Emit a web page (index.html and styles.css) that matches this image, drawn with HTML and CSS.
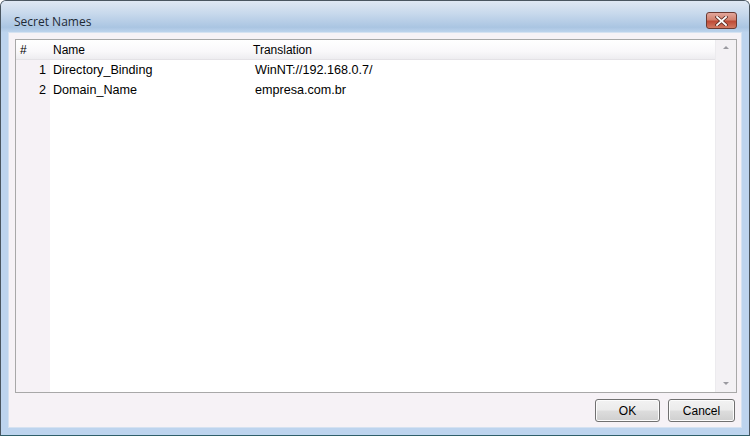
FILE: index.html
```html
<!DOCTYPE html>
<html lang="en">
<head>
    <meta charset="UTF-8">
    <title>Secret Names</title>
    <link rel="stylesheet" href="styles.css">
</head>
<body>
    <div class="window">
        <div class="titlebar">
            <span class="title">Secret Names</span>
            <button class="close-btn" title="Close">
                <svg width="13" height="10" viewBox="0 0 13 10">
                    <path d="M2 1 L11 9 M11 1 L2 9" stroke="#5a2a22" stroke-width="3.4" stroke-linecap="square"/>
                    <path d="M2 1 L11 9 M11 1 L2 9" stroke="#ffffff" stroke-width="1.8" stroke-linecap="square"/>
                </svg>
            </button>
        </div>
        <div class="client">
            <div class="grid">
                <div class="grid-body">
                    <div class="row header">
                        <div class="cell num">#</div>
                        <div class="cell name">Name</div>
                        <div class="cell value">Translation</div>
                    </div>
                    <div class="row">
                        <div class="cell num">1</div>
                        <div class="cell name">Directory_Binding</div>
                        <div class="cell value">WinNT://192.168.0.7/</div>
                    </div>
                    <div class="row">
                        <div class="cell num">2</div>
                        <div class="cell name">Domain_Name</div>
                        <div class="cell value">empresa.com.br</div>
                    </div>
                    <div class="row filler">
                        <div class="cell num"></div>
                        <div class="cell name"></div>
                    </div>
                </div>
                <div class="scrollbar">
                    <span class="arrow up"></span>
                    <span class="arrow down"></span>
                </div>
            </div>
            <div class="buttons">
                <button class="btn ok">OK</button>
                <button class="btn cancel">Cancel</button>
            </div>
        </div>
    </div>
</body>
</html>
```

FILE: styles.css
```css
body {
    margin: 0;
    font-family: "Liberation Sans", Arial, sans-serif;
    font-size: 12px;
    color: #000;
    background: #fff;
}

.window {
    width: 750px;
    height: 436px;
    box-sizing: border-box;
    border: 1px solid #4a5660;
    border-bottom-color: #2f5f6a;
    border-radius: 6px 6px 0 0;
    background: #bdd4ee;
    display: flex;
    flex-direction: column;
    padding: 0 7px 7px 7px;
}

.titlebar {
    height: 31px;
    margin: 0 -7px;
    padding: 0 12px 0 13px;
    display: flex;
    align-items: center;
    justify-content: space-between;
    background: linear-gradient(to bottom, #dfe8f3 0%, #c8d9ec 40%, #aac5e2 85%, #bcd3ec 100%);
    border-radius: 5px 5px 0 0;
}

.title {
    font-family: "Open Sans", "Liberation Sans", sans-serif;
    font-size: 12px;
    color: #1e2a36;
    padding-top: 9px;
}

.close-btn {
    width: 31px;
    height: 17px;
    margin-top: 8px;
    padding: 0;
    border: 1px solid #6b3a32;
    border-radius: 3px;
    background: linear-gradient(to bottom, #e2a69b 0%, #d2826f 45%, #bd4a36 55%, #d27a63 100%);
    display: flex;
    align-items: center;
    justify-content: center;
}

.client {
    flex: 1;
    background: #f6f2f6;
    border: 1px solid #d5e2f1;
    display: flex;
    flex-direction: column;
    padding: 6px 4px 5px 6px;
}

.grid {
    flex: 1;
    display: flex;
    border: 1px solid #a8a8a8;
    background: #fff;
    font-size: 12.6px;
}

.grid-body {
    flex: 1;
    display: flex;
    flex-direction: column;
}

.row {
    display: flex;
    height: 20px;
    align-items: center;
}

.row.header {
    height: 19px;
    background: linear-gradient(to bottom, #ffffff 0%, #f9f8fa 60%, #eeedf0 100%);
    border-bottom: 1px solid #e4e2e6;
    font-size: 12px;
}

.row.filler {
    flex: 1;
    align-items: stretch;
}

.cell {
    white-space: nowrap;
}

.cell.num {
    width: 34px;
    box-sizing: border-box;
    padding-right: 4px;
    text-align: right;
    align-self: stretch;
    display: flex;
    align-items: center;
    justify-content: flex-end;
    background: #f6f2f6;
}

.header .cell.num {
    justify-content: flex-start;
    padding-left: 4px;
    background: transparent;
}

.cell.name {
    width: 199px;
    padding-left: 3px;
}

.cell.value {
    padding-left: 3px;
}

.header .cell.value {
    padding-left: 1px;
}

.scrollbar {
    width: 20px;
    background: #f3f1f4;
    border-left: 1px solid #ecebee;
    display: flex;
    flex-direction: column;
    justify-content: space-between;
    align-items: center;
    padding: 6px 0 7px;
}

.arrow {
    width: 0;
    height: 0;
    border-left: 3px solid transparent;
    border-right: 3px solid transparent;
}

.arrow.up {
    border-bottom: 3px solid #9a9aa0;
}

.arrow.down {
    border-top: 3px solid #9a9aa0;
}

.buttons {
    display: flex;
    justify-content: flex-end;
    gap: 8px;
    padding: 6px 2px 0 0;
}

.btn {
    height: 23px;
    padding: 0;
    font-family: "Liberation Sans", Arial, sans-serif;
    font-size: 12px;
    color: #000;
    border: 1px solid #707070;
    border-radius: 3px;
    background: linear-gradient(to bottom, #f2f2f2 0%, #ebebeb 48%, #dddddd 52%, #cfcfcf 100%);
    box-shadow: inset 0 0 0 1px #fcfcfc;
}

.btn.ok {
    width: 65px;
}

.btn.cancel {
    width: 67px;
}
```
